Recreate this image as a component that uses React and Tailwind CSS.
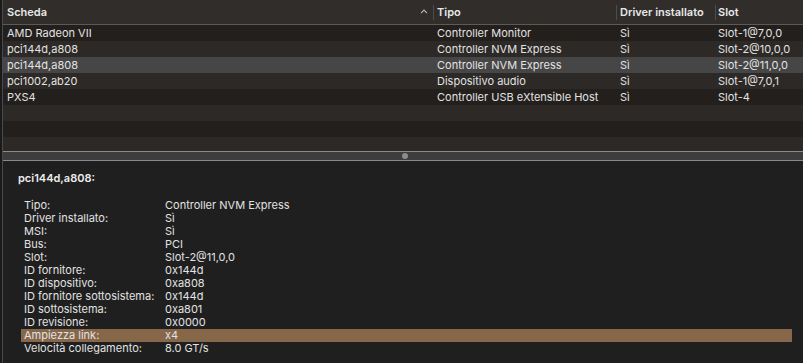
const rows = [
  ['AMD Radeon VII', 'Controller Monitor', 'Sì', 'Slot-1@7,0,0'],
  ['pci144d,a808', 'Controller NVM Express', 'Sì', 'Slot-2@10,0,0'],
  ['pci144d,a808', 'Controller NVM Express', 'Sì', 'Slot-2@11,0,0'],
  ['pci1002,ab20', 'Dispositivo audio', 'Sì', 'Slot-1@7,0,1'],
  ['PXS4', 'Controller USB eXtensible Host', 'Sì', 'Slot-4'],
  null,
  null,
  null,
]

const details = [
  ['Tipo:', 'Controller NVM Express'],
  ['Driver installato:', 'Sì'],
  ['MSI:', 'Sì'],
  ['Bus:', 'PCI'],
  ['Slot:', 'Slot-2@11,0,0'],
  ['ID fornitore:', '0x144d'],
  ['ID dispositivo:', '0xa808'],
  ['ID fornitore sottosistema:', '0x144d'],
  ['ID sottosistema:', '0xa801'],
  ['ID revisione:', '0x0000'],
  ['Ampiezza link:', 'x4'],
  ['Velocità collegamento:', '8.0 GT/s'],
]

function rowBg(i) {
  if (i === 2) return 'bg-[#474646]'
  return i % 2 === 0 ? 'bg-[#221f1d]' : 'bg-[#2c2926]'
}

export default function App() {
  return (
    <div
      className="flex h-[363px] w-[803px] overflow-hidden bg-[#1f1f1f] text-[11px] text-[#e2e2e2]"
      style={{ fontFamily: 'Inter, "Liberation Sans", Arial, sans-serif' }}
    >
      {/* left window edge */}
      <div className="w-[3px] shrink-0 bg-[#1a1a1a] border-r border-[#4a4a4a]" />

      <div className="flex flex-1 flex-col">
        {/* table */}
        <div className="flex h-[151px] flex-col bg-[#221f1d]">
          <div className="flex h-[25px] shrink-0 items-center border-b border-[#5c5a58] bg-[#302d2a] font-semibold text-[#e8e8e8]">
            <div className="flex w-[430px] items-center justify-between pl-[4px] pr-[5px]">
              <span>Scheda</span>
              <svg width="8" height="5" viewBox="0 0 8 5" className="mb-[2px]">
                <path d="M1 4.2 L4 1.2 L7 4.2" fill="none" stroke="#b5b5b5" strokeWidth="1.2" />
              </svg>
            </div>
            <div className="h-[15px] w-px bg-[#4f4d4b]" />
            <div className="w-[182px] pl-[3px]">Tipo</div>
            <div className="h-[15px] w-px bg-[#4f4d4b]" />
            <div className="w-[98px] pl-[3px]">Driver installato</div>
            <div className="h-[15px] w-px bg-[#4f4d4b]" />
            <div className="flex-1 pl-[2px]">Slot</div>
          </div>
          {rows.map((r, i) => (
            <div key={i} className={`flex h-[16px] shrink-0 items-center ${rowBg(i)}`}>
              {r && (
                <>
                  <div className="w-[431px] pl-[4px]">{r[0]}</div>
                  <div className="w-[183px] pl-[3px]">{r[1]}</div>
                  <div className="w-[99px] pl-[3px]">{r[2]}</div>
                  <div className="flex-1 pl-[2px]">{r[3]}</div>
                </>
              )}
            </div>
          ))}
        </div>

        {/* splitter */}
        <div className="flex h-[10px] shrink-0 items-center justify-center border-y border-[#8a8a8a] bg-[#3d3d3d] pl-[4px]">
          <div className="h-[6px] w-[6px] rounded-full bg-[#8c8c8c]" />
        </div>

        {/* detail pane */}
        <div className="flex flex-1 flex-col pl-[15px] pt-[9px]">
          <div className="font-semibold text-[#ececec]">pci144d,a808:</div>
          <div className="mt-[12px] flex flex-col pl-[3px]">
            {details.map(([k, v]) => (
              <div
                key={k}
                className={`flex h-[13px] w-[771px] items-center pl-[3px] ${k === 'Ampiezza link:' ? 'bg-[#86674a]' : ''}`}
              >
                <div className="w-[141px]">{k}</div>
                <div>{v}</div>
              </div>
            ))}
          </div>
        </div>
      </div>
    </div>
  )
}
